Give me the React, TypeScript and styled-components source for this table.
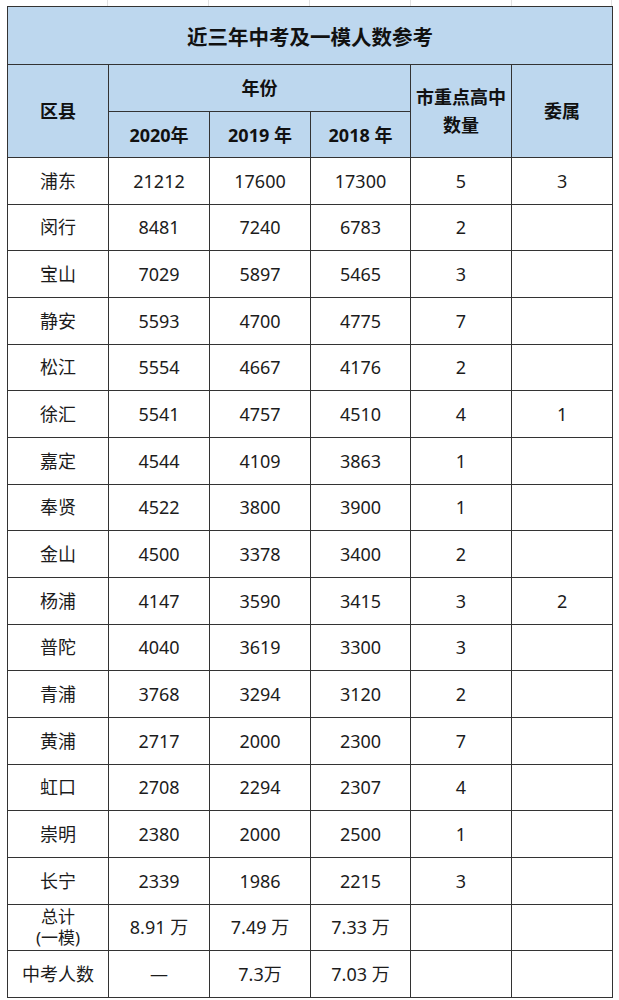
import * as React from "react";
import styled, { createGlobalStyle } from "styled-components";

const GlobalStyle = createGlobalStyle`
  html, body {
    margin: 0;
    padding: 0;
    background: #ffffff;
  }
  body {
    font-family: "Noto Sans", "Noto Sans CJK SC", sans-serif;
    color: #1c1c1c;
  }
`;

export const Page = styled.div`
  width: 619px;
  height: 1000px;
  display: flex;
  flex-direction: column;
  padding: 0 7px;
  box-sizing: border-box;
`;

export const GridStrip = styled.div`
  height: 6px;
  display: grid;
  grid-template-columns: 101px 101px 101px 101px 101px 100px;
`;

export const GridLine = styled.div`
  border-right: 1px solid #e2e2e2;
`;

export const Table = styled.table`
  width: 605px;
  border-collapse: collapse;
  table-layout: fixed;
  border: 1px solid #333;
`;

export const TitleCell = styled.th`
  height: 57px;
  background: #bdd7ee;
  border: 1px solid #333;
  font-size: 20.5px;
  font-weight: 700;
  color: #111;
  text-align: center;
  padding: 0;
`;

export const HeadCell = styled.th<{ $h?: number }>`
  height: ${(p) => p.$h || 45}px;
  background: #bdd7ee;
  border: 1px solid #333;
  font-size: 18px;
  font-weight: 700;
  color: #111;
  text-align: center;
  line-height: 28px;
  padding: 0;
`;

export const Row = styled.tr`
  height: 46.67px;
`;

export const Cell = styled.td<{ $small?: boolean }>`
  border: 1px solid #333;
  text-align: center;
  font-size: ${(p) => (p.$small ? 17 : 18)}px;
  line-height: ${(p) => (p.$small ? "21px" : "24px")};
  padding: 0;
  color: #1c1c1c;
`;

const rows: [string, string, string, string, string, string][] = [
  ["浦东", "21212", "17600", "17300", "5", "3"],
  ["闵行", "8481", "7240", "6783", "2", ""],
  ["宝山", "7029", "5897", "5465", "3", ""],
  ["静安", "5593", "4700", "4775", "7", ""],
  ["松江", "5554", "4667", "4176", "2", ""],
  ["徐汇", "5541", "4757", "4510", "4", "1"],
  ["嘉定", "4544", "4109", "3863", "1", ""],
  ["奉贤", "4522", "3800", "3900", "1", ""],
  ["金山", "4500", "3378", "3400", "2", ""],
  ["杨浦", "4147", "3590", "3415", "3", "2"],
  ["普陀", "4040", "3619", "3300", "3", ""],
  ["青浦", "3768", "3294", "3120", "2", ""],
  ["黄浦", "2717", "2000", "2300", "7", ""],
  ["虹口", "2708", "2294", "2307", "4", ""],
  ["崇明", "2380", "2000", "2500", "1", ""],
  ["长宁", "2339", "1986", "2215", "3", ""],
];

export default function App() {
  return (
    <Page>
      <GlobalStyle />
      <GridStrip>
        {[0, 1, 2, 3, 4, 5].map((i) => (
          <GridLine key={i} />
        ))}
      </GridStrip>
      <Table>
        <colgroup>
          <col style={{ width: 101 }} />
          <col style={{ width: 101 }} />
          <col style={{ width: 101 }} />
          <col style={{ width: 100 }} />
          <col style={{ width: 101 }} />
          <col style={{ width: 101 }} />
        </colgroup>
        <thead>
          <tr>
            <TitleCell colSpan={6}>近三年中考及一模人数参考</TitleCell>
          </tr>
          <tr>
            <HeadCell rowSpan={2}>区县</HeadCell>
            <HeadCell colSpan={3} $h={46}>
              年份
            </HeadCell>
            <HeadCell rowSpan={2}>
              市重点高中
              <br />
              数量
            </HeadCell>
            <HeadCell rowSpan={2}>委属</HeadCell>
          </tr>
          <tr>
            <HeadCell>2020年</HeadCell>
            <HeadCell>2019 年</HeadCell>
            <HeadCell>2018 年</HeadCell>
          </tr>
        </thead>
        <tbody>
          {rows.map((r) => (
            <Row key={r[0]}>
              {r.map((v, i) => (
                <Cell key={i}>{v}</Cell>
              ))}
            </Row>
          ))}
          <Row>
            <Cell $small>
              总计
              <br />
              (一模)
            </Cell>
            <Cell>8.91 万</Cell>
            <Cell>7.49 万</Cell>
            <Cell>7.33 万</Cell>
            <Cell />
            <Cell />
          </Row>
          <Row>
            <Cell>中考人数</Cell>
            <Cell>—</Cell>
            <Cell>7.3万</Cell>
            <Cell>7.03 万</Cell>
            <Cell />
            <Cell />
          </Row>
        </tbody>
      </Table>
    </Page>
  );
}
